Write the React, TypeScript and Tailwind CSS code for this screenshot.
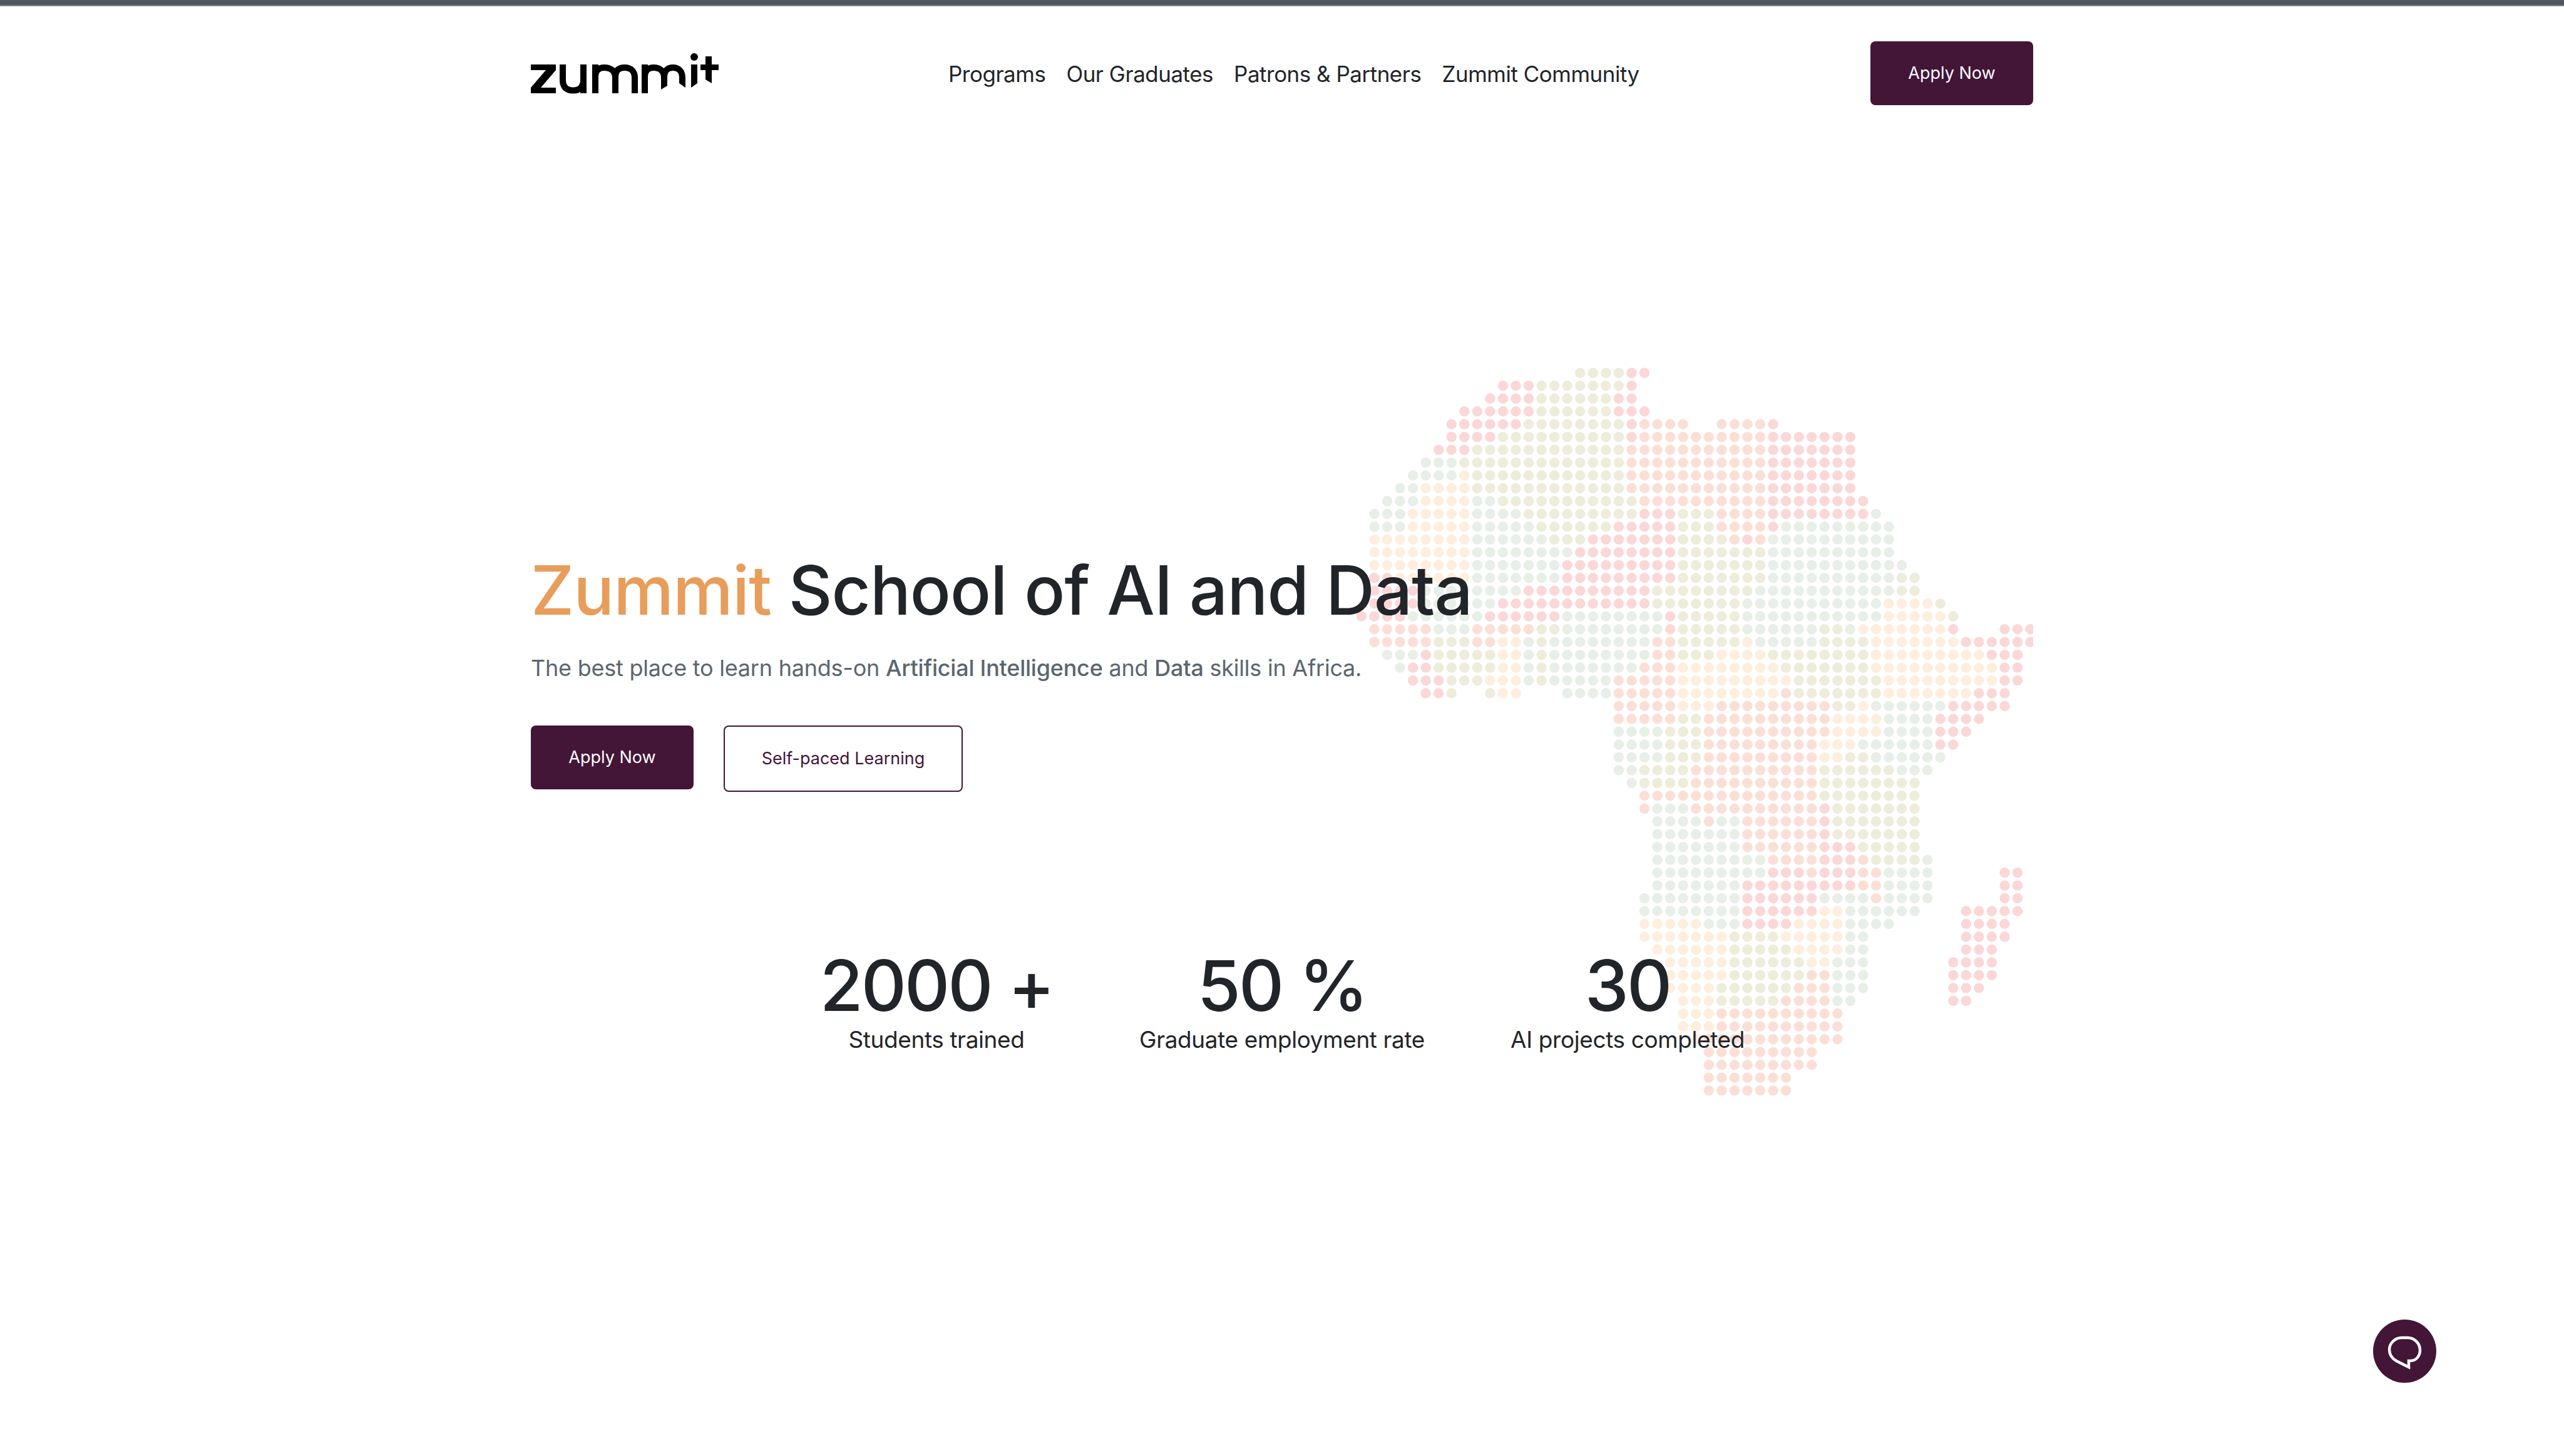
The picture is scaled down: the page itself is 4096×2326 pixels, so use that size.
import React from 'react';

const DOT_COLORS: Record<string, string> = {
    g: '#e8eee8',
    o: '#fdeede',
    y: '#eeecda',
    p: '#fbd7d7',
    s: '#fbdfd6',
};

// each run: first column, colour, last column
const MAP_ROWS = [
    '16y19 20p21',
    '10p12 13y19 20p20',
    '9p12 13y18 19p20',
    '7p12 13y18 19p21',
    '6p11 12y19 20p20 21s24 27s30 31p31',
    '6p9 10y19 20p20 21s30 31p37',
    '5p7 8y19 20s30 31p37',
    '4g6 7y19 20s30 31p37',
    '3g6 7o7 8y19 20s30 31p37',
    '2g3 4o7 8y19 20s30 31p37',
    '1g3 4o7 8g9 10y20 21s30 31p38',
    '0g2 3o7 8g11 12y20 21p23 24y26 27s30 31p38 39g39',
    '0g2 3o7 8g12 13y18 19p23 24y26 27s30 31p31 32g40',
    '0o7 8g13 14y16 17p23 24y27 28s28 29p29 30s30 31g40',
    '0o7 8g15 16p23 24y30 31g40',
    '0o7 8g14 15p23 24y30 31g41',
    '0p1 2o7 8g14 15p23 24y30 31g40 41y42',
    '0p3 4g11 12p21 22y29 30g40 41y42',
    '0p3 4g9 10p21 22y28 29g39 40o43 44y44',
    '-1p2 3g8 9p14 15g22 23p23 24y28 29g39 40o44 45y45',
    '0s4 5g7 8s12 13y14 15g22 23p23 24y28 29g34 35y36 37g37 38o44 45p45 49p51',
    '0s4 5y7 8s9 10o11 12g12 13y13 14g21 22s23 24y28 29o29 30g34 35y38 39o45 46p51',
    '1g3 4p4 5y9 10o11 12g12 13y13 14g21 22s23 24y26 27o30 31y38 39o47 48p50',
    '2g2 3p4 5y9 10o11 12g12 13y13 14g20 21s23 24o31 32y38 39o48 49p50',
    '3p5 6y8 9o11 12g12 13y13 14g18 19s23 24o32 33y39 40o48 49p50',
    '4p5 6y6 9y9 10o11 15g18 19s23 24o31 32s32 33y39 40o46 47p49',
    '19s23 24o26 27s35 36y37 38o38 39g44 45p49',
    '19s23 24y25 26s35 36o39 40g43 44p47',
    '19g22 23y25 26s35 36o39 40g43 44p46',
    '19g22 23y25 26s34 35o37 38g43 44p45',
    '19g22 23y25 26s34 35o36 37y38 39g44',
    '19g20 21y24 25s34 35y40 41g43',
    '20g20 21y24 25s34 35y42',
    '21s34 35y42',
    '21s21 22g24 25s34 35p35 36y42',
    '22g25 26s26 27g28 29s34 35p35 36y42',
    '22g28 29s34 35p35 36y42',
    '22g28 29s34 35p37 38y42',
    '22g30 31s34 35p37 38s38 39y42 43g43',
    '22g30 31p33 34s34 35p37 38s39 40g43 49p50',
    '22g28 29p37 38s39 40g43 49p50',
    '21g28 29p34 35g38 39s39 40g43 49p50',
    '21g28 29p34 35o36 37g42 46p50',
    '21o25 26g28 29p32 33o36 37g40 46p49',
    '21o27 28y31 32o36 37g38 46p49',
    '22o27 28y32 33o36 37g38 46p48',
    '23o27 28y33 34o35 36g38 45p48',
    '23o27 28y33 34s35 36g38 45p48',
    '23o26 27y32 33s35 36g38 45p47',
    '24o26 27y31 32s35 36g37 45p46',
    '24o26 27s36',
    '24o26 27s36',
    '25o25 26s36',
    '26s34',
    '26s34',
    '26s32',
    '26s32',
];

const MAP_DOTS = MAP_ROWS.flatMap((row, r) =>
    row.split(' ').flatMap((run) => {
        const m = run.match(/^(-?\d+)([a-z])(\d+)$/);
        if (!m) return [];
        const dots = [];
        for (let k = Number(m[1]); k <= Number(m[3]); k++) {
            dots.push({ k, r, fill: DOT_COLORS[m[2]] });
        }
        return dots;
    }),
);

const AfricaMap = () => (
    <svg
        className="absolute left-[2166px] top-[586px]"
        width={1082}
        height={1164}
        viewBox="0 0 1082 1164"
    >
        {MAP_DOTS.map((d) => (
            <circle
                key={`${d.r}-${d.k}`}
                cx={29.5 + d.k * 20.55}
                cy={9.8 + d.r * 20.47}
                r={8.2}
                fill={d.fill}
            />
        ))}
    </svg>
);

const Logo = () => (
    <svg width={302} height={65} viewBox="848 85 302 65" fill="none">
        <g fill="#000">
            <polygon points="848,103 888,103 888,112 864,140 888,140 888,149 848,149 848,140 872,112 848,112" />
            <polygon points="1056,126 1066,126 1066,137 1056,143" />
            <polygon points="1085,126 1095,126 1095,140 1085,133" />
            <polygon points="1104,103 1114,103 1114,133 1104,140" />
            <polygon points="1127,90 1137,90 1137,133 1127,127" />
            <rect x={1119} y={103} width={29} height={9} />
            <circle cx={1109} cy={91} r={6} />
        </g>
        <g stroke="#000" strokeWidth={10}>
            <path d="M899 103V128C899 139 905 144.5 915.5 144.5C926 144.5 932 139 932 128V103M932 125V149" />
            <path d="M951 103V149M951 122C951 112 957 108 965 108C977 108 983 114 983 124V149M983 124C983 112 989 108 998 108C1008 108 1014 114 1014 124V149" />
            <path d="M1030 103V149M1030 122C1030 112 1036 108 1044 108C1055 108 1061 114 1061 124V128M1061 124C1061 112 1067 108 1075 108C1084 108 1090 114 1090 124V128" />
        </g>
    </svg>
);

const navLinks = ['Programs', 'Our Graduates', 'Patrons & Partners', 'Zummit Community'];

const stats = [
    { value: '2000 +', label: 'Students trained' },
    { value: '50 %', label: 'Graduate employment rate' },
    { value: '30', label: 'AI projects completed' },
];

export default function App() {
    return (
        <div className="relative h-[2326px] overflow-hidden bg-white font-['Inter',sans-serif] text-[#212529]">
            <AfricaMap />

            <div className="h-[10px] border-b-2 border-[#7c8288] bg-[#4f565e]" />

            <div className="relative mx-auto w-[2400px]">
                <header className="mt-[56px] flex h-[102px] items-center">
                    <Logo />
                    <nav className="ml-[365px] mt-[3px] flex gap-[33px] text-[35px] tracking-[-0.5px]">
                        {navLinks.map((link) => (
                            <a key={link} href="#">
                                {link}
                            </a>
                        ))}
                    </nav>
                    <button className="ml-auto h-[102px] w-[260px] rounded-[8px] bg-[#431537] text-[27px] text-white">
                        Apply Now
                    </button>
                </header>

                <h1 className="mt-[710px] text-[108px] leading-[130px] font-medium tracking-[-1px] whitespace-nowrap">
                    <span className="text-[#e89d5a]">Zummit</span> School of AI and Data
                </h1>
                <p className="mt-[34px] text-[36px] leading-[50px] tracking-[-0.23px] text-[#5b666f]">
                    The best place to learn hands-on{' '}
                    <span className="font-medium">Artificial Intelligence</span> and{' '}
                    <span className="font-medium">Data</span> skills in Africa.
                </p>
                <div className="mt-[67px] flex items-start gap-[48px]">
                    <button className="h-[102px] w-[260px] rounded-[8px] bg-[#431537] text-[27px] text-white">
                        Apply Now
                    </button>
                    <button className="h-[106px] w-[382px] rounded-[8px] border-2 border-[#431537] text-[27px] text-[#431537]">
                        Self-paced Learning
                    </button>
                </div>
            </div>

            <div className="relative mx-auto mt-[249px] grid w-[1656px] grid-cols-3 text-center">
                {stats.map((s) => (
                    <div key={s.label}>
                        <div className="text-[112px] leading-[120px] font-medium tracking-[-3px]">
                            {s.value}
                        </div>
                        <div className="mt-[2px] text-[37px] leading-[50px] tracking-[-0.4px]">
                            {s.label}
                        </div>
                    </div>
                ))}
            </div>

            <button className="absolute left-[3791px] top-[2108px] h-[101px] w-[101px] rounded-full bg-[#431537]">
                <svg width={101} height={101} viewBox="0 0 101 101" fill="none">
                    <path
                        d="M57 66H59C69 66 75 58 75 49C75 37 65 29 55 29H46C35 29 26 38 26 48C26 56 30 62 37 66L57 76Z"
                        stroke="#fff"
                        strokeWidth={4.5}
                    />
                </svg>
            </button>
        </div>
    );
}
